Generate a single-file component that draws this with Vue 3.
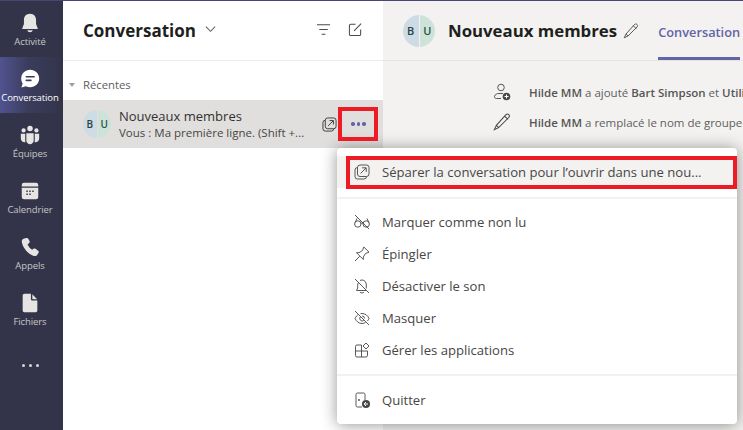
<script setup>
const rail = [
  { id: 'bell', label: 'Activité' },
  { id: 'chat', label: 'Conversation', active: true },
  { id: 'team', label: 'Équipes' },
  { id: 'cal', label: 'Calendrier' },
  { id: 'call', label: 'Appels' },
  { id: 'file', label: 'Fichiers' },
]
const midItems = [
  { id: 'unread', label: 'Marquer comme non lu' },
  { id: 'pin', label: 'Épingler' },
  { id: 'mute', label: 'Désactiver le son' },
  { id: 'hide', label: 'Masquer' },
  { id: 'apps', label: 'Gérer les applications' },
]
</script>

<template>
  <div class="app">
    <nav class="rail">
      <div v-for="r in rail" :key="r.id" class="rail-item" :class="{ active: r.active }">
        <svg class="rail-icon" viewBox="0 0 24 24">
          <template v-if="r.id === 'bell'">
            <path d="M12 2c-4.200 0-6.600 3-6.600 7v4.200L3.600 17.600c-.2.500.1 1 .7 1h15.400c.6 0 .9-.5.7-1l-1.800-4.400V9c0-4-2.400-7-6.600-7z" />
            <path d="M9 20h6c-.3 1.300-1.500 2.200-3 2.200S9.300 21.300 9 20z" />
          </template>
          <template v-else-if="r.id === 'chat'">
            <path fill-rule="evenodd" d="M12.200 2C17.500 2 22 6.200 22 11.500S17.500 21 12.200 21c-1.700 0-3.300-.4-4.700-1.200L2.600 21.400 4 16.900C3 15.400 2.400 13.500 2.400 11.500 2.400 6.200 6.900 2 12.200 2zM8 8.600a.9.900 0 0 0 0 1.800h8.500a.9.900 0 0 0 0-1.800zM8 12.600a.9.900 0 0 0 0 1.800h5a.9.900 0 0 0 0-1.800z" />
          </template>
          <template v-else-if="r.id === 'team'">
            <circle cx="12" cy="5" r="3" /><circle cx="5" cy="7" r="2.300" /><circle cx="19" cy="7" r="2.300" />
            <path d="M8 10h8v8c0 2.300-1.800 4-4 4s-4-1.700-4-4z" />
            <path d="M2 10.500h4.800V18c0 .7.100 1.300.3 1.900-2.800.4-5.100-1.400-5.100-4.200zM22 10.500h-4.800V18c0 .7-.1 1.300-.3 1.900 2.800.4 5.100-1.400 5.100-4.200z" />
          </template>
          <template v-else-if="r.id === 'cal'">
            <path fill-rule="evenodd" d="M5.500 3h13A2.500 2.500 0 0 1 21 5.500V7H3V5.500A2.500 2.500 0 0 1 5.500 3zM3 8.500h18v10a2.500 2.500 0 0 1-2.500 2.500h-13A2.500 2.500 0 0 1 3 18.500zM8 11.500h1.600v1.600H8zM11.200 11.500h1.600v1.600h-1.600zM14.400 11.500H16v1.600h-1.600zM8 14.800h1.600v1.600H8zM11.200 14.800h1.600v1.600h-1.600z" />
          </template>
          <template v-else-if="r.id === 'call'">
            <path d="M7.800 2.200 5 3.100C3.300 3.700 2.700 5.300 3.200 7.400c1.600 6.300 6.600 12 12.300 14.200 2 .7 3.700.2 4.700-1.400l1.100-1.800c.5-.8.300-1.700-.4-2.300l-2.900-2.200c-.7-.5-1.600-.5-2.300 0l-1.300 1c-2.100-1-4.300-3.700-5-6l1.500-1c.7-.5 1-1.400.7-2.200L10.300 3.300c-.4-.9-1.500-1.400-2.500-1.100z" />
          </template>
          <template v-else>
            <path d="M6 2h7v5.500c0 1 .8 1.800 1.800 1.800H20v11A1.700 1.700 0 0 1 18.300 22H5.700A1.700 1.700 0 0 1 4 20.300V3.900C4 2.900 5 2 6 2z" />
            <path d="M14.500 2.400 19.800 7.800h-4.500a.8.800 0 0 1-.8-.8z" />
          </template>
        </svg>
        <span class="rail-label">{{ r.label }}</span>
      </div>
      <div class="rail-more">
        <i></i><i></i><i></i>
      </div>
    </nav>

    <section class="list">
      <header class="list-head">
        <h1>Conversation</h1>
        <svg class="chev" viewBox="0 0 12 8"><path d="M1 1.500 6 6.500 11 1.500" /></svg>
        <span class="spacer"></span>
        <svg class="head-icon" viewBox="0 0 16 16"><path d="M1 3h14M3.500 8h9M6 13h4" /></svg>
        <svg class="head-icon compose" viewBox="0 0 16 16">
          <path d="M8 2.500H3A1.500 1.500 0 0 0 1.500 4v9A1.500 1.500 0 0 0 3 14.500h9a1.500 1.500 0 0 0 1.500-1.500V8" />
          <path d="M6.500 9.500 14 1.800" />
        </svg>
      </header>
      <div class="recent">
        <span class="tri"></span>
        <span>Récentes</span>
      </div>
      <div class="chat-row">
        <div class="avatar small"><span class="a-b">B</span><span class="a-u">U</span></div>
        <div class="chat-text">
          <div class="chat-name">Nouveaux membres</div>
          <div class="chat-msg">Vous : Ma première ligne. (Shift +...</div>
        </div>
        <svg class="popout" viewBox="0 0 16 16">
          <rect x="3.500" y="1" width="11.500" height="11.500" rx="2.500" />
          <path d="M3.500 3.500A2.500 2.500 0 0 0 1 6v6.500A2.500 2.500 0 0 0 3.500 15H10a2.500 2.500 0 0 0 2.500-2.500" />
          <path d="M6.500 9.500 12 4M8 3.800h4.200V8" />
        </svg>
        <div class="dots"><i></i><i></i><i></i></div>
      </div>
    </section>

    <main class="content">
      <header class="content-head">
        <div class="avatar big"><span class="a-b">B</span><span class="a-u">U</span></div>
        <h2>Nouveaux membres</h2>
        <svg class="pen" viewBox="0 0 16 16"><path d="M11.500 1.500c.8-.7 1.800-.7 2.500 0s.7 1.800 0 2.500L5 13l-3.800 1.800L3 11zM3 11l2 2M10.300 2.700l3 3" /></svg>
        <div class="tab">Conversation</div>
      </header>
      <div class="events">
        <div class="event">
          <svg class="ev-icon" viewBox="0 0 18 18">
            <circle cx="8" cy="4.500" r="3.300" />
            <path d="M8 15.500H3.500C2 15.500 1.200 14.500 1.500 13.300 2 11.500 3.800 10.500 6 10.500h4" />
            <circle class="plus-bg" cx="13.500" cy="13.500" r="3.800" />
            <path class="plus" d="M13.500 11.500v4M11.500 13.500h4" />
          </svg>
          <span><span class="who">Hilde MM</span> a ajouté <span class="who">Bart Simpson</span> et <span class="who">Utilisateur</span></span>
        </div>
        <div class="event">
          <svg class="ev-icon" viewBox="0 0 16 16"><path d="M11.500 1.500c.8-.7 1.800-.7 2.500 0s.7 1.800 0 2.500L5 13l-3.800 1.800L3 11zM3 11l2 2M10.300 2.700l3 3" /></svg>
          <span><span class="who">Hilde MM</span> a remplacé le nom de groupe</span>
        </div>
      </div>
    </main>

    <div class="menu">
      <div class="m-row first">
        <svg class="m-icon" viewBox="0 0 16 16">
          <rect x="3.500" y="1" width="11.500" height="11.500" rx="2.500" />
          <path d="M3.500 3.500A2.500 2.500 0 0 0 1 6v6.500A2.500 2.500 0 0 0 3.500 15H10a2.500 2.500 0 0 0 2.500-2.500" />
          <path d="M6.500 9.500 12 4M8 3.800h4.200V8" />
        </svg>
        <span class="m-label">Séparer la conversation pour l’ouvrir dans une nou...</span>
      </div>
      <div class="sep"></div>
      <div v-for="m in midItems" :key="m.id" class="m-row">
        <svg class="m-icon" viewBox="0 0 16 16">
          <template v-if="m.id === 'unread'">
            <circle cx="3.800" cy="10" r="3.200" /><circle cx="12.200" cy="10" r="3.200" />
            <path d="M7 9.500c.6-.5 1.400-.5 2 0M1.200 8.500 3 4.500M14.800 8.500 13 4.500M1 1l14 14" />
          </template>
          <template v-else-if="m.id === 'pin'">
            <path d="M9.800 1 15 6.200 11.500 7.500 9.300 11 9.300 13.500 2.500 6.700 5 6.700 8.500 4.500zM5.800 10.200 1 15" />
          </template>
          <template v-else-if="m.id === 'mute'">
            <path d="M1 1l14 14M4.500 4.500C4 5.300 3.700 6.200 3.700 7.200V10L2.500 12.500H12M6 2.600C6.600 2.200 7.300 2 8 2c2.600 0 4.300 2.200 4.300 5v3.500M6 14c.5.700 1.200 1 2 1s1.500-.3 2-1" />
          </template>
          <template v-else-if="m.id === 'hide'">
            <path d="M1 1l14 14M1 8.500C2 6.500 3 5.300 4.500 4.500M6.500 3.700C7 3.600 7.500 3.500 8 3.500c3.300 0 5.700 2 7 5-.4 1-1 1.800-1.600 2.500M11.500 12.500c-1 .6-2.200 1-3.500 1-3.200 0-5.600-2-7-5" />
            <path d="M6.300 7a2.500 2.500 0 0 0 3.500 3.500M8 6a2.500 2.500 0 0 1 2.500 2.500" />
          </template>
          <template v-else>
            <path d="M7.500 3H3a1.500 1.500 0 0 0-1.500 1.500v9A1.500 1.500 0 0 0 3 15h9a1.500 1.500 0 0 0 1.500-1.500V9M1.500 9h12M7.500 3v12" />
            <path d="M12 1 15 4 12 7 9 4z" />
          </template>
        </svg>
        <span class="m-label">{{ m.label }}</span>
      </div>
      <div class="sep second"></div>
      <div class="m-row">
        <svg class="m-icon" viewBox="0 0 16 16">
          <path d="M8 15H3.500A1.500 1.500 0 0 1 2 13.500v-11A1.500 1.500 0 0 1 3.500 1h6A1.500 1.500 0 0 1 11 2.500V8" />
          <circle class="dot" cx="5" cy="8" r=".9" />
          <circle class="plus-bg" cx="12" cy="12" r="4" />
          <path class="plus" d="M14 12h-4M12 10l-2 2 2 2" />
        </svg>
        <span class="m-label">Quitter</span>
      </div>
    </div>

    <div class="mark mark-dots"></div>
    <div class="mark mark-row"></div>
  </div>
</template>

<style>
html, body { margin: 0; background: #f3f2f1; }
</style>

<style scoped>
.app {
  position: relative;
  display: flex;
  width: 743px;
  height: 430px;
  overflow: hidden;
  font-family: "Open Sans", "Noto Sans", sans-serif;
  color: #252423;
  background: #f3f2f1;
}
.rail {
  flex: 0 0 63px;
  background: #33344a;
  border-top: 1px solid #464775;
  display: flex;
  flex-direction: column;
  align-items: stretch;
  box-sizing: border-box;
}
.rail-item {
  height: 56px;
  display: flex;
  flex-direction: column;
  align-items: center;
  padding: 11px 3px 0 0;
  box-sizing: border-box;
  color: #c8c6c4;
}
.rail-item.active {
  color: #fff;
  background: linear-gradient(90deg, #50538f 0%, #3b3c5c 45%, #33344a 100%);
}
.rail-icon { width: 22px; height: 22px; fill: #e6e5e3; flex: none; }
.active .rail-icon { fill: #fff; }
.rail-label {
  font-size: 9.500px;
  line-height: 13px;
  margin-top: 1px;
  letter-spacing: -0.1px;
  white-space: nowrap;
}
.rail-more {
  display: flex;
  justify-content: center;
  gap: 4px;
  padding: 27px 3px 0 0;
}
.rail-more i { width: 3px; height: 3px; border-radius: 50%; background: #d8d7d5; }

.list {
  flex: 0 0 320px;
  background: #fff;
  border-top: 1px solid #464775;
  box-sizing: border-box;
}
.list-head {
  height: 60px;
  display: flex;
  align-items: center;
  padding: 0 20px;
  border-bottom: 1px solid #edebe9;
  box-sizing: border-box;
}
.list-head h1 {
  margin: 0 9px 0 0;
  font-size: 17px;
  font-weight: 700;
  line-height: 60px;
  color: #201f1e;
}
.chev { width: 11px; height: 8px; fill: none; stroke: #605e5c; stroke-width: 1.100; margin-top: -3px; }
.spacer { flex: 1; }
.head-icon { width: 15px; height: 15px; fill: none; stroke: #4a4947; stroke-width: 1.100; margin-top: -2px; }
.head-icon.compose { margin-left: 17px; }
.recent {
  height: 39px;
  padding: 8px 0 0 6px;
  display: flex;
  align-items: center;
  gap: 8px;
  font-size: 11.300px;
  color: #605e5c;
  box-sizing: border-box;
}
.tri {
  width: 0;
  height: 0;
  border-left: 3.500px solid transparent;
  border-right: 3.500px solid transparent;
  border-top: 4px solid #a19f9d;
}
.chat-row {
  height: 48px;
  background: #e1dfdd;
  display: flex;
  align-items: center;
  padding-left: 20px;
  box-sizing: border-box;
}
.avatar {
  display: flex;
  border-radius: 50%;
  overflow: hidden;
  flex: none;
  font-weight: 600;
  color: #2b3f48;
}
.avatar span { flex: 1; display: flex; align-items: center; justify-content: center; }
.a-b { background: #cddce4; margin-right: 1px; }
.a-u { background: #cde3d9; color: #2f5245; }
.avatar.small { width: 28px; height: 28px; font-size: 10px; margin-right: 8px; }
.avatar.big { width: 32px; height: 32px; font-size: 11px; margin-right: 13px; }
.chat-text { width: 200px; flex: none; }
.chat-name { font-size: 13px; line-height: 17px; color: #323130; }
.chat-msg { font-size: 11.500px; line-height: 15px; color: #484644; white-space: nowrap; }
.popout { width: 15px; height: 15px; fill: none; stroke: #3b3a39; stroke-width: 1; margin-left: 3px; }
.dots { display: flex; gap: 2px; margin-left: 14px; }
.dots i { width: 3.500px; height: 3.500px; border-radius: 50%; background: #6264a7; }

.content { flex: 1; min-width: 0; border-top: 1px solid #464775; }
.content-head {
  height: 60px;
  display: flex;
  align-items: center;
  padding-left: 20px;
  border-bottom: 1px solid #e5e3e1;
  box-sizing: border-box;
  white-space: nowrap;
}
.content-head h2 {
  margin: 0 6px 0 0;
  font-size: 16.800px;
  font-weight: 700;
  line-height: 60px;
  color: #201f1e;
}
.pen { width: 16px; height: 16px; fill: none; stroke: #4a4947; stroke-width: .9; flex: none; }
.tab {
  margin-left: 19px;
  height: 59px;
  line-height: 62px;
  font-size: 12.800px;
  font-weight: 600;
  color: #6264a7;
  border-bottom: 3px solid #6264a7;
  box-sizing: border-box;
}
.events { padding: 16px 0 0 110px; }
.event {
  display: flex;
  align-items: center;
  gap: 18px;
  height: 30px;
  font-size: 11.500px;
  color: #605e5c;
  white-space: nowrap;
}
.who { font-weight: 600; color: #575553; }
.ev-icon { width: 18px; height: 18px; fill: none; stroke: #484644; stroke-width: .9; flex: none; }
.plus-bg { fill: #484644; stroke: none; }
.plus { stroke: #fff; stroke-width: 1; fill: none; }

.menu {
  position: absolute;
  left: 337px;
  top: 148px;
  width: 400px;
  height: 276px;
  background: #fff;
  border-radius: 4px;
  box-shadow: 0 1px 16px rgba(0, 0, 0, .42);
  padding-top: 8px;
  box-sizing: border-box;
}
.m-row {
  display: flex;
  align-items: center;
  height: 32px;
  padding-left: 17px;
  font-size: 13.100px;
  color: #484644;
}
.m-row.first { background: #f3f2f1; }
.m-icon { width: 16px; height: 16px; fill: none; stroke: #484644; stroke-width: .9; flex: none; margin-right: 12px; }
.m-icon .dot { fill: #484644; stroke: none; }
.m-label { white-space: nowrap; }
.sep { height: 2px; background: #f3f2f1; margin: 9px 0 7px; }
.sep.second { margin: 8px 0 8px; }

.mark { position: absolute; border: 4px solid #ed1c24; box-sizing: border-box; }
.mark-dots { left: 338px; top: 107px; width: 40px; height: 34px; }
.mark-row { left: 346px; top: 156px; width: 391px; height: 33px; }
</style>
